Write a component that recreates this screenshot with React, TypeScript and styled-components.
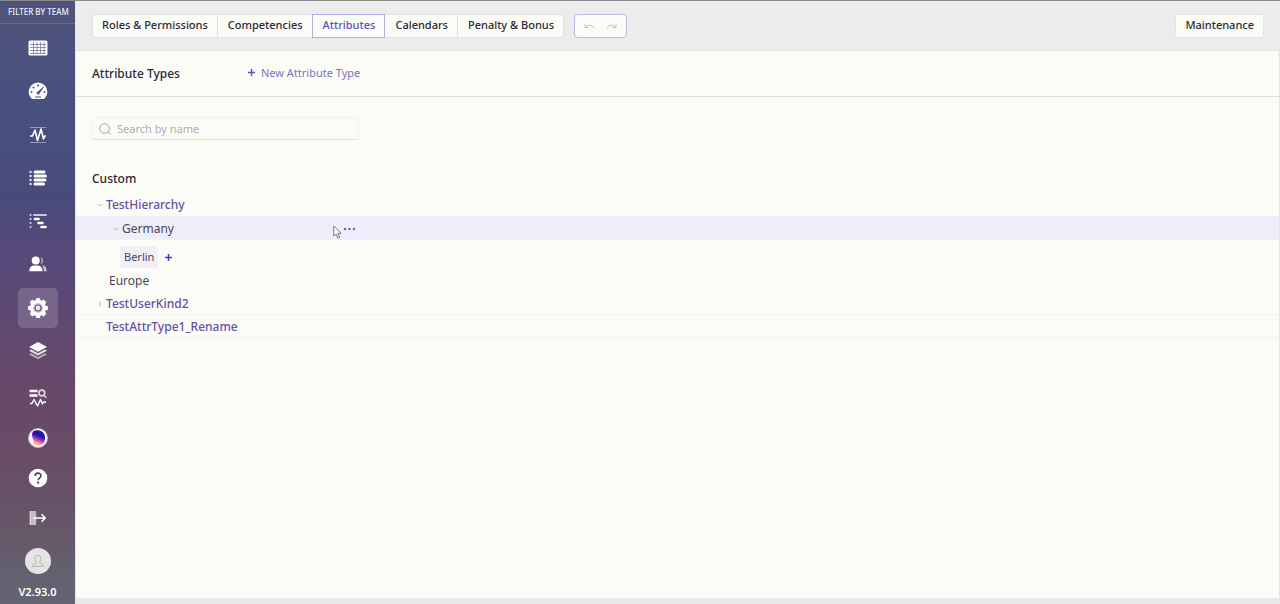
import React from "react";
import styled, { createGlobalStyle, css } from "styled-components";

const GlobalStyle = createGlobalStyle`
  * { box-sizing: border-box; }
  body { margin: 0; background: #fbfcf6; }
  body, button, input { font-family: "Noto Sans", "Open Sans", sans-serif; }
  button { margin: 0; padding: 0; border: 0; background: none; color: inherit; cursor: pointer; }
  h1, h2, ul, p { margin: 0; padding: 0; list-style: none; }
`;

const Page = styled.div`
  display: flex;
  min-height: 100vh;
  border-top: 1px solid #8f8a8e;
`;

const Sidebar = styled.aside`
  flex: none;
  width: 76px;
  display: flex;
  flex-direction: column;
  align-items: center;
  color: #fff;
  border-right: 1px solid #e4e4f0;
  background: linear-gradient(#50547a 0%, #485080 18%, #484b7a 33%, #594979 44%, #66496a 62%, #684b66 74%, #665668 87%, #636270 96%, #636371 100%);
`;

const TeamFilter = styled.button`
  && { color: #f0f0fa; }
  width: 100%;
  height: 23px;
  padding-left: 2px;
  border-bottom: 1px solid #646890;
  font-size: 8px;
  line-height: 22px;
  font-weight: 500;
  white-space: nowrap;
`;

const MainNav = styled.nav`
  flex: 1;
  display: flex;
  flex-direction: column;
  justify-content: space-between;
  padding: 4px 0 7px;
`;

const FootNav = styled.nav`
  display: flex;
  flex-direction: column;
  align-items: center;
`;

const NavButton = styled.button<{ $active?: boolean }>`
  width: 40px;
  height: 40px;
  display: flex;
  align-items: center;
  justify-content: center;
  border-radius: 5px;
  ${(p) => p.$active && css`&& { background: #776689; }`}
  svg { display: block; }
`;

const Avatar = styled.button`
  && { background: #e4e4e4; }
  width: 26px;
  height: 26px;
  margin: 10px 0 8px;
  border-radius: 50%;
  display: flex;
  align-items: center;
  justify-content: center;
`;

const Version = styled.p`
  height: 22px;
  padding-top: 2px;
  font-size: 11px;
  line-height: 16px;
  font-weight: 600;
`;

const Main = styled.main`
  flex: 1;
  min-width: 0;
  display: flex;
  flex-direction: column;
  color: #2b2838;
  font-size: 12px;
  border-bottom: 6px solid #e7e9e8;
`;

const Toolbar = styled.header`
  height: 50px;
  padding: 0 16px;
  display: flex;
  align-items: center;
  gap: 10px;
  background: #ebecec;
  border-bottom: 1px solid #e3e5e4;
`;

const Tabs = styled.nav`
  display: flex;
`;

const tabStyle = css`
  height: 24px;
  padding: 0 9px 2px 10px;
  border: 1px solid #dfe0e4;
  background: #fbfcf6;
  color: #2b2838;
  font-size: 11px;
  line-height: 20px;
  font-weight: 500;
  white-space: nowrap;
`;

const Tab = styled.button<{ $active?: boolean }>`
  && { ${tabStyle} }
  && + && { margin-left: -1px; }
  &&:first-child { border-radius: 3px 0 0 3px; padding-left: 9px; }
  &&:last-child { border-radius: 0 3px 3px 0; }
  ${(p) => p.$active && css`&& { position: relative; color: #5a52c4; border-color: #b3aee2; }`}
`;

const History = styled.div`
  height: 24px;
  display: flex;
  align-items: center;
  gap: 11px;
  padding: 0 9px;
  background: #fbfcf6;
  border: 1px solid #bdb9e6;
  border-radius: 4px;
  button, svg { display: block; }
`;

const Maintenance = styled.button`
  && { ${tabStyle} padding-left: 9px; border-radius: 3px; margin-left: auto; border-color: #e3e4e6; }
`;

const Content = styled.section`
  flex: 1;
  border-right: 1px solid #e3e4e6;
  background: #fbfcf6;
`;

const TitleBar = styled.div`
  height: 46px;
  padding-left: 16px;
  display: flex;
  align-items: center;
  border-bottom: 1px solid #dfe0e5;
`;

const Title = styled.h1`
  width: 155px;
  font-size: 12px;
  line-height: 20px;
  font-weight: 500;
`;

const NewType = styled.button`
  && { color: #7a74c2; padding-bottom: 2px; }
  display: flex;
  align-items: center;
  gap: 5px;
  font-size: 11px;
  line-height: 20px;
`;

const Search = styled.label`
  width: 267px;
  height: 23px;
  margin: 20px 0 0 16px;
  padding: 0 6px;
  display: flex;
  align-items: center;
  gap: 6px;
  border: 1px solid #f1f2f1;
  border-bottom-color: #dfe0e3;
  border-radius: 3px;
  svg { flex: none; }
`;

const SearchInput = styled.input`
  flex: 1;
  min-width: 0;
  padding: 0;
  border: 0;
  outline: 0;
  background: none;
  font-size: 11px;
  line-height: 20px;
  &::placeholder { color: #adadb4; opacity: 1; }
`;

const GroupTitle = styled.h2`
  margin: 29px 0 4px 16px;
  font-size: 12px;
  line-height: 20px;
  font-weight: 500;
`;

const Row = styled.li<{ $level?: number; $hover?: boolean; $ruled?: boolean }>`
  position: relative;
  height: ${(p) => (p.$hover ? 24 : 23)}px;
  padding-top: 1px;
  padding-left: ${(p) => (p.$level ? 34 : 18)}px;
  display: flex;
  align-items: center;
  background: ${(p) => (p.$hover ? "#eeeefb" : "none")};
  ${(p) => p.$ruled && css`box-shadow: inset 0 -1px #f3f3f5;`}
`;

const Toggle = styled.button`
  width: 12px;
  height: 12px;
  display: flex;
  align-items: center;
  justify-content: center;
`;

const Spacer = styled.span<{ $short?: boolean }>`
  width: ${(p) => (p.$short ? 15 : 12)}px;
`;

const TypeName = styled.span`
  color: #6650a8;
  font-size: 12px;
  line-height: 20px;
  font-weight: 500;
`;

const ValueName = styled.span`
  color: #4a4659;
  font-size: 12px;
  line-height: 20px;
`;

const More = styled.button`
  width: 13px;
  height: 12px;
  position: absolute;
  left: 267px;
  display: flex;
  align-items: center;
`;

const Pointer = styled.svg`
  position: absolute;
  left: 257px;
  top: 9px;
`;

const ChipRow = styled.li`
  height: 29px;
  padding: 6px 0 1px 44px;
  display: flex;
  align-items: center;
  gap: 6px;
`;

const Chip = styled.span`
  height: 22px;
  padding: 0 4px;
  border-radius: 3px;
  background: #f1eef6;
  color: #4a4659;
  font-size: 11px;
  line-height: 22px;
`;

const AddButton = styled.button`
  display: flex;
`;

const Plus = ({ color }: { color: string }) => (
  <svg width="9" height="9" viewBox="0 0 9 9" stroke={color} strokeWidth="1.5">
    <path d="M4.5 1v7M1 4.5h7" />
  </svg>
);

const Chevron = ({ open }: { open?: boolean }) => (
  <svg width="8" height="8" viewBox="0 0 8 8" fill="none" stroke="#b9b9c4">
    <path d={open ? "M1.5 3 4 5l2.5-2" : "M3 1.5 5 4 3 6.5"} />
  </svg>
);

const GridIcon = () => (
  <svg width="20" height="16" viewBox="0 0 20 16">
    <rect x=".5" y=".5" width="19" height="15" rx="1.5" fill="#fff" />
    <path d="M2 4.5h16M2 7.5h16M2 10.500h16M2 13.500h16M5.500 2v12M9 2v12M12.500 2v12M16 2v12" stroke="#777a9c" strokeWidth=".8" />
  </svg>
);

const GaugeIcon = () => (
  <svg width="20" height="18" viewBox="0 0 20 18">
    <path d="M10 .5A9.300 9.300 0 0 0 .7 9.800c0 3 1.200 5.500 3.300 7.200h12c2.100-1.700 3.300-4.200 3.300-7.200A9.300 9.300 0 0 0 10 .5Z" fill="#fff" />
    <path d="m8.600 11 7-6-5.200 7.400Z" fill="#4c5280" stroke="#4c5280" strokeWidth=".8" />
    <g fill="#4c5280"><circle cx="3.500" cy="10" r="1" /><circle cx="5.500" cy="5.600" r="1" /><circle cx="10" cy="3.500" r="1" /><circle cx="16.500" cy="10" r="1" /></g>
    <path d="M7 15h6" stroke="#4c5280" />
  </svg>
);

const PulseIcon = () => (
  <svg width="18" height="18" viewBox="0 0 18 18" fill="none">
    <path d="M1 1.500h16M1 16.500h16" stroke="#9a9abb" />
    <path d="M1 10h2.500L6 4l2.500 10.500L12 3l2.500 10 1.200-3H17" stroke="#fff" strokeWidth="1.600" strokeLinejoin="round" />
  </svg>
);

const ListIcon = () => (
  <svg width="18" height="16" viewBox="0 0 18 16" stroke="#fff" strokeLinecap="round">
    <path d="M1.500 2h.1M1.500 6h.1M1.500 10h.1M1.500 14h.1" strokeWidth="2.400" stroke="#ddd9ef" />
    <path d="M6 2h9M6 6h10.500M6 10h10M6 14h8.500" strokeWidth="3" />
  </svg>
);

const TreeIcon = () => (
  <svg width="18" height="16" viewBox="0 0 18 16" stroke="#fff" strokeLinecap="round">
    <path d="M1.500 2h.1M1.500 6h.1M1.500 10h.1M1.500 14h.1" strokeWidth="2.200" stroke="#cdc8e4" />
    <path d="M5 2h12" strokeWidth="2" stroke="#cdc8e4" />
    <path d="M6 6h3.500M9.500 10h4M12.500 14h4" strokeWidth="2.600" />
  </svg>
);

const UsersIcon = () => (
  <svg width="18" height="16" viewBox="0 0 18 16" fill="#fff">
    <path d="M11.500.8a4 4 0 0 1 0 7.400c1.500-2 1.500-5.400 0-7.400ZM13 9.200c3.200.3 4.700 2.500 4.700 6h-3c0-2.700-.4-4.600-1.700-6Z" fill="#c9c1dc" />
    <circle cx="6.700" cy="4.500" r="4" />
    <path d="M.3 15.200C.3 11.500 2.300 9.400 5 9.400h3.500c3 0 5 2.100 5 5.800Z" />
  </svg>
);

const GearIcon = () => (
  <svg width="22" height="22" viewBox="0 0 22 22">
    <g fill="#fff">
      <circle cx="11" cy="11" r="8" />
      {[0, 45, 90, 135, 180, 225, 270, 315].map((a) => (
        <rect key={a} x="8.700" y="1" width="4.600" height="5" rx="1.500" transform={`rotate(${a} 11 11)`} />
      ))}
    </g>
    <circle cx="11" cy="11" r="5" fill="#c9c3d2" />
    <circle cx="11" cy="11" r="3" fill="#e9e6ee" stroke="#675c7c" strokeWidth="1.200" />
  </svg>
);

const LayersIcon = () => (
  <svg width="20" height="20" viewBox="0 0 20 20">
    <path d="m1 13.500 9 4.800 9-4.800-2.200-1.200L10 16l-6.800-3.700Z" fill="#b9a9bb" />
    <path d="m1 9.800 9 4.800 9-4.800-2.200-1.200L10 12.300 3.200 8.600Z" fill="#e8e0e8" />
    <path d="m10 1 9 4.900-9 4.900-9-4.900Z" fill="#fff" />
  </svg>
);

const AnalysisIcon = () => (
  <svg width="18" height="18" viewBox="0 0 18 18" fill="none">
    <path d="M.5 2h8M.5 6.500h8" stroke="#fff" strokeWidth="2.400" />
    <circle cx="12.800" cy="4" r="2.900" stroke="#e3d6e4" strokeWidth="1.600" />
    <path d="m15 6.300 2.300 2.400" stroke="#e3d6e4" strokeWidth="1.600" />
    <path d="M1 14.500h2l2-4L8.500 17l3-6.500 2 4.500 1-2H17" stroke="#fff" strokeWidth="1.400" strokeLinejoin="round" />
  </svg>
);

const OrbIcon = () => (
  <svg width="20" height="20" viewBox="0 0 20 20">
    <defs>
      <linearGradient id="orb" x1=".75" y1="0" x2=".4" y2="1">
        <stop offset="0" stopColor="#1a2396" />
        <stop offset=".4" stopColor="#2a13ad" />
        <stop offset=".6" stopColor="#8a3bc4" />
        <stop offset=".78" stopColor="#ff7a78" />
        <stop offset="1" stopColor="#ffd9b8" />
      </linearGradient>
    </defs>
    <circle cx="10" cy="10" r="9.500" fill="#f6f1fa" stroke="#cdc2d4" strokeWidth=".8" />
    <path d="M5 3.500C8 1.500 13 1.800 15.500 5c2.200 3 2 8-.5 10.500-2.500 2.500-7 2.800-10 1 .8-1.500 1-3.500.2-5C4 9 3.300 6 5 3.500Z" fill="url(#orb)" />
    <path d="M5 8c1 4 5 3.500 8.500 6" fill="none" stroke="#e34bb4" strokeWidth="1" opacity=".8" />
  </svg>
);

const HelpIcon = () => (
  <svg width="20" height="20" viewBox="0 0 20 20" fill="none">
    <circle cx="10" cy="10" r="9.300" fill="#fff" />
    <path d="M7.200 7.900C7.200 4.200 13 4.300 13 7.700c0 2.300-2.900 2.200-2.900 4.600" stroke="#4b4354" strokeWidth="1.600" />
    <circle cx="10.100" cy="14.700" r="1.100" fill="#4b4354" />
  </svg>
);

const LogoutIcon = () => (
  <svg width="18" height="14" viewBox="0 0 18 14" fill="none">
    <path d="M.8 0h6.400v14H.8Z" fill="#c9b8cb" />
    <path d="M1.300 0v14" stroke="#e8dde9" />
    <path d="M4.500 7H16M12.500 3.300 16.200 7l-3.700 3.700" stroke="#fff" strokeWidth="1.600" />
  </svg>
);

const PersonIcon = () => (
  <svg width="14" height="14" viewBox="0 0 14 14" fill="none" stroke="#b4b4b4">
    <path d="M5.300 8.300C3.800 6.800 3.200 1.300 7 1.300s3.200 5.500 1.700 7c0 1.700 3.800 1 3.800 4h-11c0-3 3.800-2.300 3.800-4Z" />
  </svg>
);

const ArcIcon = ({ flip }: { flip?: boolean }) => (
  <svg width="11" height="8" viewBox="0 0 11 8" fill="none" stroke="#bfbcdf">
    <g transform={flip ? "translate(11 0) scale(-1 1)" : undefined}>
      <path d="M1.200 5C3.500 2.500 8.500 2.300 10 6.500M1 2.500V5.500h3.500" />
    </g>
  </svg>
);

const MAIN_ITEMS = [
  { label: "Schedule", Icon: GridIcon },
  { label: "Dashboard", Icon: GaugeIcon },
  { label: "Activity", Icon: PulseIcon },
  { label: "List", Icon: ListIcon },
  { label: "Timeline", Icon: TreeIcon },
  { label: "Users", Icon: UsersIcon },
  { label: "Settings", Icon: GearIcon, active: true },
  { label: "Layers", Icon: LayersIcon },
];

const FOOT_ITEMS = [
  { label: "Analysis", Icon: AnalysisIcon },
  { label: "Assistant", Icon: OrbIcon },
  { label: "Help", Icon: HelpIcon },
  { label: "Log out", Icon: LogoutIcon },
];

const TABS = ["Roles & Permissions", "Competencies", "Attributes", "Calendars", "Penalty & Bonus"];

export default function App() {
  return (
    <>
      <GlobalStyle />
      <Page>
        <Sidebar>
          <TeamFilter>FILTER BY TEAM</TeamFilter>
          <MainNav>
            {MAIN_ITEMS.map(({ label, Icon, active }) => (
              <NavButton key={label} aria-label={label} $active={active}><Icon /></NavButton>
            ))}
          </MainNav>
          <FootNav>
            {FOOT_ITEMS.map(({ label, Icon }) => (
              <NavButton key={label} aria-label={label}><Icon /></NavButton>
            ))}
            <Avatar aria-label="Profile"><PersonIcon /></Avatar>
          </FootNav>
          <Version>V2.93.0</Version>
        </Sidebar>
        <Main>
          <Toolbar>
            <Tabs>
              {TABS.map((tab) => (
                <Tab key={tab} $active={tab === "Attributes"}>{tab}</Tab>
              ))}
            </Tabs>
            <History>
              <button aria-label="Undo"><ArcIcon /></button>
              <button aria-label="Redo"><ArcIcon flip /></button>
            </History>
            <Maintenance>Maintenance</Maintenance>
          </Toolbar>
          <Content>
            <TitleBar>
              <Title>Attribute Types</Title>
              <NewType><Plus color="#5a52c4" />New Attribute Type</NewType>
            </TitleBar>
            <Search>
              <svg width="12" height="12" viewBox="0 0 12 12" fill="none" stroke="#a3a3ab">
                <circle cx="5.500" cy="5.500" r="4.800" />
                <path d="m9 9 2.700 2.700" />
              </svg>
              <SearchInput type="text" aria-label="Search by name" placeholder="Search by name" />
            </Search>
            <GroupTitle>Custom</GroupTitle>
            <ul>
              <Row>
                <Toggle aria-label="Collapse TestHierarchy"><Chevron open /></Toggle>
                <TypeName>TestHierarchy</TypeName>
              </Row>
              <Row $level={1} $hover>
                <Toggle aria-label="Collapse Germany"><Chevron open /></Toggle>
                <ValueName>Germany</ValueName>
                <More aria-label="More actions">
                  <svg width="13" height="4" viewBox="0 0 13 4" fill="#6f69b8">
                    <circle cx="2" cy="2" r="1.300" /><circle cx="6.500" cy="2" r="1.300" /><circle cx="11" cy="2" r="1.300" />
                  </svg>
                </More>
                <Pointer width="9" height="14" viewBox="0 0 9 14" fill="#fff" stroke="#77757f">
                  <path d="M.8 1v10l2.400-2 1.700 4 1.700-.8L5 8.300h3Z" />
                </Pointer>
              </Row>
              <ChipRow>
                <Chip>Berlin</Chip>
                <AddButton aria-label="Add value"><Plus color="#3f3fc0" /></AddButton>
              </ChipRow>
              <Row>
                <Spacer $short />
                <ValueName>Europe</ValueName>
              </Row>
              <Row $ruled>
                <Toggle aria-label="Expand TestUserKind2"><Chevron /></Toggle>
                <TypeName>TestUserKind2</TypeName>
              </Row>
              <Row $ruled>
                <Spacer />
                <TypeName>TestAttrType1_Rename</TypeName>
              </Row>
            </ul>
          </Content>
        </Main>
      </Page>
    </>
  );
}
